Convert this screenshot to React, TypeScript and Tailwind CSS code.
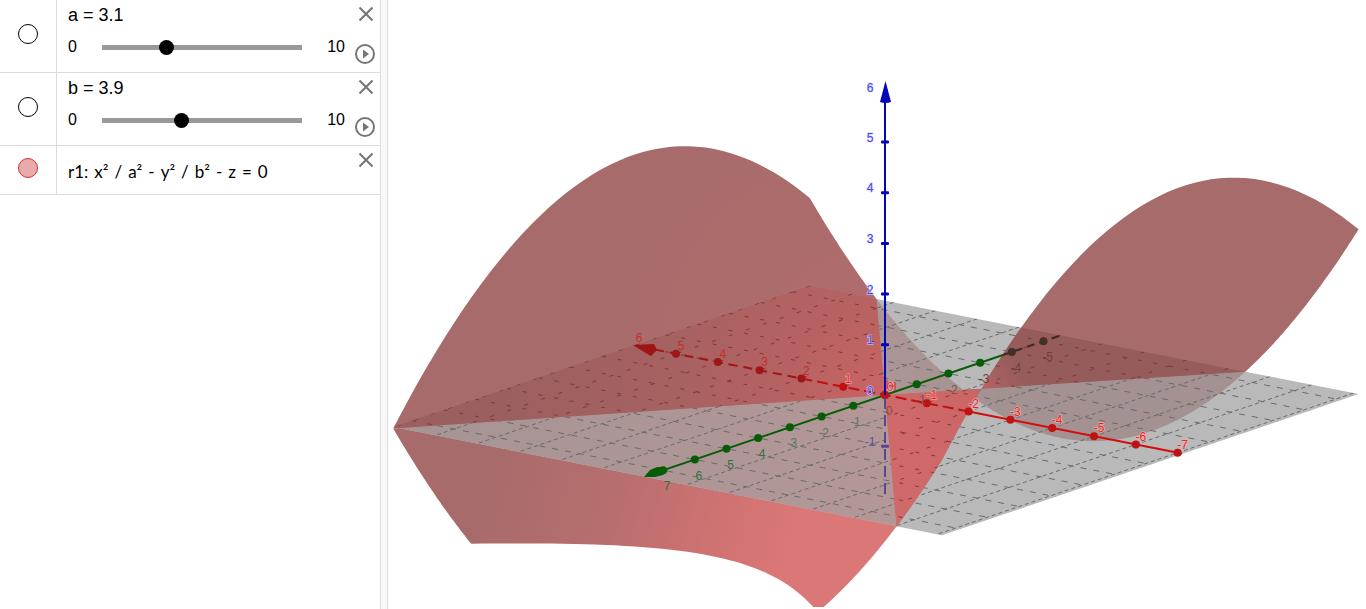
import React, { useState } from 'react';

// Axis vectors of the parallel projection, in drawing units
const ORIGIN = { x: 885, y: 395 };
const A2 = 9.61;
const B2 = 15.21;
const X_MIN = -7.12;
const X_MAX = 6.01;
const Y_MIN = -5.55;
const Y_MAX = 7.59;
const Z_MIN = -2;

function project(x: number, y: number, z = 0) {
  return {
    x: ORIGIN.x - 41.8 * x - 31.7 * y,
    y: ORIGIN.y - 8.25 * x + 10.75 * y - 50.7 * z,
  };
}

function point(x: number, y: number, z = 0) {
  const p = project(x, y, z);
  return `${p.x.toFixed(1)},${p.y.toFixed(1)}`;
}

const surface = (x: number, y: number) => x ** 2 / A2 - y ** 2 / B2;

function sample(from: number, to: number, at: (t: number) => string) {
  const steps = 48;
  return Array.from({ length: steps + 1 }, (_, i) => at(from + ((to - from) * i) / steps));
}

const edgeX = (x: number, from: number, to: number) => sample(from, to, (y) => point(x, y, surface(x, y)));
const edgeY = (y: number, from: number, to: number) => sample(from, to, (x) => point(x, y, surface(x, y)));

// Where the surface crosses z = 0 and z = Z_MIN on the two y edges
const slope = Math.sqrt(A2 / B2);
const farZero = Math.abs(Y_MIN) * slope;
const nearZero = Y_MAX * slope;
const nearCut = Math.sqrt(A2 * (Y_MAX ** 2 / B2 + Z_MIN));

const plane = [point(X_MAX, Y_MAX), point(X_MAX, Y_MIN), point(X_MIN, Y_MIN), point(X_MIN, Y_MAX)].join(' ');

const leftArch = [...edgeX(X_MAX, Y_MAX, Y_MIN), ...edgeY(Y_MIN, X_MAX, farZero), point(0, 0)].join(' ');

const rightArch = [
  point(0, 0),
  ...edgeY(Y_MIN, -farZero, X_MIN),
  ...edgeX(X_MIN, Y_MIN, Y_MAX),
  ...edgeY(Y_MAX, X_MIN, -nearZero),
].join(' ');

const farSlope = [point(0, 0), ...edgeY(Y_MIN, farZero, -farZero)].join(' ');

const nearSlope = [
  point(0, 0),
  ...edgeY(Y_MAX, X_MAX, nearCut),
  ...sample(nearCut, -nearCut, (x) => point(x, Math.sqrt(B2 * (x ** 2 / A2 - Z_MIN)), Z_MIN)),
  ...edgeY(Y_MAX, -nearCut, -nearZero),
].join(' ');

const range = (from: number, to: number) => Array.from({ length: to - from + 1 }, (_, i) => from + i);

function Line({ from, to, ...rest }: { from: number[]; to: number[] } & React.SVGProps<SVGLineElement>) {
  const p = project(from[0], from[1], from[2]);
  const q = project(to[0], to[1], to[2]);
  return <line x1={p.x} y1={p.y} x2={q.x} y2={q.y} {...rest} />;
}

function Grid({ stroke, dashX, dashY }: { stroke: string; dashX: string; dashY: string }) {
  return (
    <g stroke={stroke} strokeWidth="1">
      {range(-7, 6).map((x) => (
        <Line key={`x${x}`} from={[x, Y_MIN]} to={[x, Y_MAX]} strokeDasharray={dashX} />
      ))}
      {range(-5, 7).map((y) => (
        <Line key={`y${y}`} from={[X_MAX, y]} to={[X_MIN, y]} strokeDasharray={dashY} />
      ))}
    </g>
  );
}

function AxisX() {
  return (
    <g fill="#b81818" stroke="#c01010" strokeWidth="2">
      <Line from={[5.5, 0]} to={[2, 0]} stroke="#a01414" strokeDasharray="9 6" />
      <Line from={[2, 0]} to={[-2, 0]} strokeDasharray="11 5" />
      <Line from={[-2, 0]} to={[-7.1, 0]} stroke="#d40c0c" />
      <path d="M633 345 654 344 657 350 651 356 644 352Z" fill="#9c1414" stroke="none" />
      {range(-7, 5).map((n) => {
        const p = project(n, 0);
        return <circle key={n} cx={p.x} cy={p.y} r="4" fill={n > 1 ? '#a01616' : '#c01212'} stroke="none" />;
      })}
    </g>
  );
}

function AxisY() {
  return (
    <g fill="#085c08" stroke="#085c08" strokeWidth="2">
      <Line from={[0, 7.1]} to={[0, -3.7]} />
      <Line from={[0, -3.7]} to={[0, -5.55]} stroke="#3a2a22" strokeDasharray="8 5" />
      <path d="M644 477 650 470 657 467 664 467 667 471 663 475 655 477Z" stroke="none" />
      {range(-5, 7).map((n) => {
        const p = project(0, n);
        return <circle key={n} cx={p.x} cy={p.y} r="4" fill={n < -3 ? '#432f26' : '#085c08'} stroke="none" />;
      })}
    </g>
  );
}

function AxisZ() {
  return (
    <g fill="#0404b8" stroke="#0404b8">
      <Line from={[0, 0, 0]} to={[0, 0, Z_MIN]} stroke="#5a4590" strokeWidth="2" strokeDasharray="11 6" strokeDashoffset="-3" />
      <Line from={[0, 0, 0]} to={[0, 0, 5.8]} strokeWidth="2" />
      <path d="M885.500 81 891 102Q885.500 104 880 102Z" stroke="none" />
      {[-1, 1, 2, 3, 4, 5].map((n) => (
        <rect
          key={n}
          x="881"
          y={project(0, 0, n).y - 1}
          width="8"
          height="3"
          rx="1"
          fill={n < 0 ? '#5a4590' : '#0404b8'}
          stroke="none"
        />
      ))}
    </g>
  );
}

function AxisLabels() {
  return (
    <g fontFamily='"Liberation Sans", Arial, sans-serif' fontSize="12" textAnchor="middle">
      {range(-7, 6).map((n) => {
        const p = project(n, 0);
        return (
          <text
            key={`x${n}`}
            x={p.x + 5}
            y={p.y - 4}
            fill={n > 1 ? '#c03030' : '#e82828'}
            stroke={n > 1 ? 'none' : '#f4b4b4'}
            strokeWidth="1"
            paintOrder="stroke"
          >
            {n}
          </text>
        );
      })}
      {range(-5, 7).map((n) => {
        const p = project(0, n);
        const fill = n > 3 ? '#33703a' : n > 0 ? '#5c7460' : n < -2 ? '#743c3c' : '#805050';
        return (
          <text key={`y${n}`} x={p.x + 4} y={p.y + 20} fill={fill}>
            {n}
          </text>
        );
      })}
      {range(-1, 6).map((n) => (
        <text
          key={`z${n}`}
          x="870"
          y={project(0, 0, n).y + (n === 6 ? 1 : 0)}
          fill={n < 0 ? '#5a50a8' : '#4848f0'}
          stroke={n < 0 ? 'none' : '#d0d0ff'}
          strokeWidth="1"
          paintOrder="stroke"
        >
          {n}
        </text>
      ))}
      <path d="M887 380v9M889 386h5M895 382v9" fill="none" stroke="#e02020" strokeWidth="1" />
    </g>
  );
}

function Graphics3D() {
  return (
    <svg viewBox="388 0 978 609" className="block h-auto w-full" role="img" aria-label="Hyperbolic paraboloid r1">
      <defs>
        <clipPath id="on-plane">
          <polygon points={plane} />
        </clipPath>
        <clipPath id="on-arches">
          <polygon points={leftArch} />
          <polygon points={rightArch} />
        </clipPath>
        <clipPath id="view">
          <rect x="388" y="0" width="978" height="607" />
        </clipPath>
        <radialGradient id="arch" gradientUnits="userSpaceOnUse" cx="870" cy="360" r="300">
          <stop offset="0" stopColor="#b46c6c" />
          <stop offset="0.4" stopColor="#ad6c6c" />
          <stop offset="1" stopColor="#a76b6b" />
        </radialGradient>
        <radialGradient id="arch-plane" gradientUnits="userSpaceOnUse" cx="885" cy="395" r="400">
          <stop offset="0" stopColor="#cb6464" />
          <stop offset="0.25" stopColor="#b66262" />
          <stop offset="0.55" stopColor="#a66161" />
          <stop offset="1" stopColor="#9b5f5f" />
        </radialGradient>
        <linearGradient id="near" gradientUnits="userSpaceOnUse" x1="490" y1="470" x2="790" y2="560">
          <stop offset="0" stopColor="#a86b6b" />
          <stop offset="0.4" stopColor="#b76e6e" />
          <stop offset="0.75" stopColor="#d07272" />
          <stop offset="1" stopColor="#db7777" />
        </linearGradient>
        <linearGradient id="near-plane" gradientUnits="userSpaceOnUse" x1="400" y1="430" x2="890" y2="450">
          <stop offset="0" stopColor="#a69494" />
          <stop offset="1" stopColor="#b49797" />
        </linearGradient>
        <linearGradient id="right-plane" gradientUnits="userSpaceOnUse" x1="900" y1="460" x2="1020" y2="370">
          <stop offset="0" stopColor="#d06a6a" />
          <stop offset="0.65" stopColor="#cc6666" />
          <stop offset="0.85" stopColor="#a46060" />
          <stop offset="1" stopColor="#965c5c" />
        </linearGradient>
        <linearGradient id="far-plane" gradientUnits="userSpaceOnUse" x1="880" y1="0" x2="1000" y2="0">
          <stop offset="0" stopColor="#ac9595" />
          <stop offset="1" stopColor="#a49292" />
        </linearGradient>
      </defs>
      <g clipPath="url(#view)">
        <polygon points={nearSlope} fill="url(#near)" />
        <polygon points={plane} fill="#b9b9b9" />
        <polygon points={farSlope} fill="url(#far-plane)" />
        <polygon points={nearSlope} fill="url(#near-plane)" clipPath="url(#on-plane)" />
        <g clipPath="url(#on-plane)">
          <Grid stroke="#666c6a" dashX="4 3" dashY="6 7" />
        </g>
        <polygon points={leftArch} fill="url(#arch)" />
        <polygon points={rightArch} fill="#a86b6b" />
        <g clipPath="url(#on-plane)">
          <polygon points={leftArch} fill="url(#arch-plane)" />
          <polygon points={rightArch} fill="url(#right-plane)" />
          <g clipPath="url(#on-arches)">
            <Grid stroke="#7c3a3a" dashX="4 14" dashY="4 12" />
          </g>
        </g>
        <AxisY />
        <AxisX />
        <AxisZ />
        <AxisLabels />
      </g>
    </svg>
  );
}

function CloseButton({ label }: { label: string }) {
  return (
    <button type="button" aria-label={label} className="block size-4 text-[#757575]">
      <svg viewBox="0 0 16 16" className="size-4" fill="none" stroke="currentColor" strokeWidth="2">
        <path d="M2.500 1.500 15.500 14.500M15.500 1.500 2.500 14.500" />
      </svg>
    </button>
  );
}

function PlayButton({ label }: { label: string }) {
  return (
    <button type="button" aria-label={label} className="block size-5 text-[#757575]">
      <svg viewBox="0 0 20 20" className="size-5">
        <circle cx="10" cy="10" r="9" fill="none" stroke="currentColor" strokeWidth="2" />
        <path d="M8 5.500v9l6-4.500Z" fill="currentColor" />
      </svg>
    </button>
  );
}

function SliderRow({ name, initial }: { name: string; initial: number }) {
  const [value, setValue] = useState(initial);
  return (
    <li className="flex h-[73px] border-b border-[#dcdcdc]">
      <div className="flex w-[57px] shrink-0 justify-center border-r border-[#dcdcdc] pt-6">
        <button type="button" aria-label={`Show ${name}`} className="size-5 rounded-full border border-black bg-white" />
      </div>
      <div className="min-w-0 flex-1 pt-[5px] pl-[11px]">
        <label htmlFor={`slider-${name}`} className="block text-lg leading-5">
          {name} = {value}
        </label>
        <div className="mt-3 flex items-center text-base leading-5">
          <span className="w-[34px]">0</span>
          <input
            id={`slider-${name}`}
            type="range"
            min={0}
            max={10}
            step={0.1}
            value={value}
            onChange={(e) => setValue(Number(e.target.value))}
            className="h-[5px] w-[200px] appearance-none bg-[#999999] outline-none [&::-webkit-slider-thumb]:size-[15px] [&::-webkit-slider-thumb]:appearance-none [&::-webkit-slider-thumb]:rounded-full [&::-webkit-slider-thumb]:bg-black"
          />
          <span className="ml-auto pr-[5px]">10</span>
        </div>
      </div>
      <div className="flex w-[30px] shrink-0 flex-col items-center justify-between pt-[6px] pb-2">
        <CloseButton label={`Delete ${name}`} />
        <PlayButton label={`Play ${name}`} />
      </div>
    </li>
  );
}

const EQUATION = ['r1:', 'x²', '/', 'a²', '-', 'y²', '/', 'b²', '-', 'z', '=', '0'];

function EquationRow() {
  return (
    <li className="flex h-[49px] border-b border-[#dcdcdc]">
      <div className="flex w-[57px] shrink-0 justify-center border-r border-[#dcdcdc] pt-3">
        <button
          type="button"
          aria-label="Show r1"
          className="size-5 rounded-full border border-[#cc3333] bg-[#e8aaaa]"
        />
      </div>
      <p className="flex flex-1 gap-[6px] pt-4 pl-[11px] font-['Lato',sans-serif] text-[17px] leading-5">
        {EQUATION.map((token, i) => (
          <span key={i}>{token}</span>
        ))}
      </p>
      <div className="flex w-[30px] shrink-0 justify-center pt-[6px]">
        <CloseButton label="Delete r1" />
      </div>
    </li>
  );
}

export default function App() {
  return (
    <div className="flex min-h-screen bg-white font-['Liberation_Sans',Arial,sans-serif] text-black">
      <aside className="w-[380px] shrink-0">
        <ul>
          <SliderRow name="a" initial={3.1} />
          <SliderRow name="b" initial={3.9} />
          <EquationRow />
        </ul>
      </aside>
      <div className="w-2 shrink-0 border-x border-[#dcdcdc] bg-[#f8f8f8]" />
      <main className="min-w-0 flex-1">
        <Graphics3D />
      </main>
    </div>
  );
}
